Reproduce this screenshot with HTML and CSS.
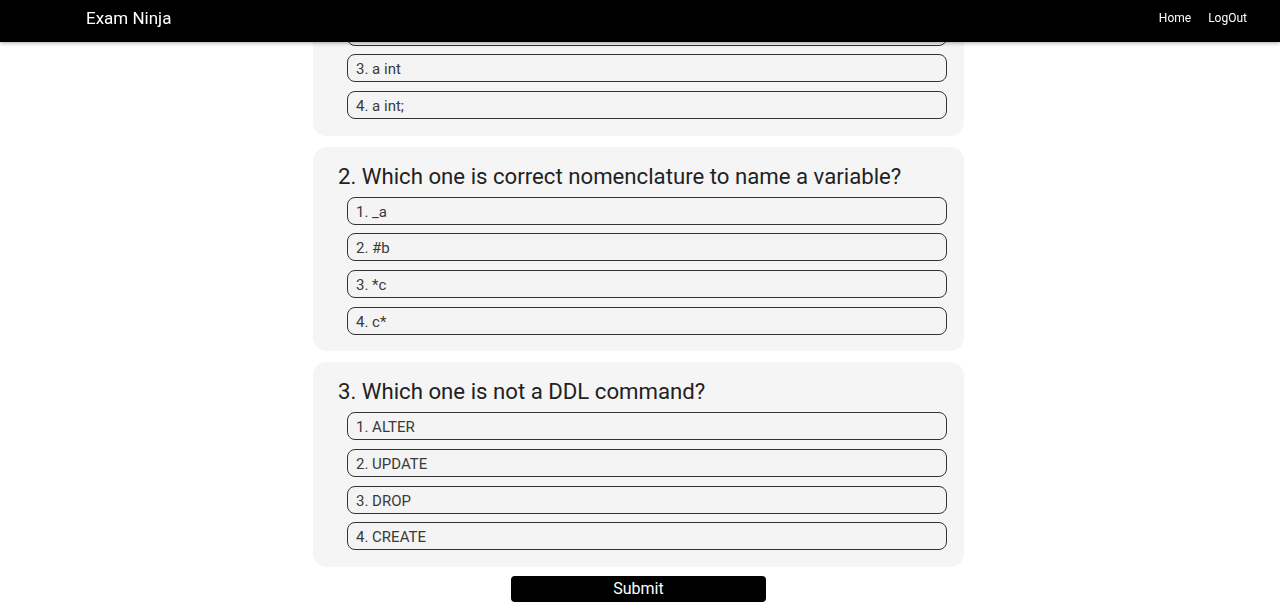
FILE: index.html
```html
<!DOCTYPE html>
<html>
<head>
<meta charset="utf-8">
<title>Exam Ninja</title>
<link rel="stylesheet" href="styles.css">
</head>
<body>
<nav class="navbar">
  <div class="brand">Exam Ninja</div>
  <div class="links"><a href="#">Home</a><a href="#">LogOut</a></div>
</nav>
<main class="quiz">
  <section class="card">
    <h2 class="question">1. Which one is the correct way to declare a variable?</h2>
    <div class="options">
      <div class="option">1. int a;</div>
      <div class="option">2. int a</div>
      <div class="option">3. a int</div>
      <div class="option">4. a int;</div>
    </div>
  </section>
  <section class="card">
    <h2 class="question">2. Which one is correct nomenclature to name a variable?</h2>
    <div class="options">
      <div class="option">1. _a</div>
      <div class="option">2. #b</div>
      <div class="option">3. *c</div>
      <div class="option">4. c*</div>
    </div>
  </section>
  <section class="card">
    <h2 class="question">3. Which one is not a DDL command?</h2>
    <div class="options">
      <div class="option">1. ALTER</div>
      <div class="option">2. UPDATE</div>
      <div class="option">3. DROP</div>
      <div class="option">4. CREATE</div>
    </div>
  </section>
  <button class="submit">Submit</button>
</main>
</body>
</html>
```

FILE: styles.css
```css
html, body {
  margin: 0;
  padding: 0;
  background: #ffffff;
  font-family: Roboto, "Liberation Sans", sans-serif;
}
.navbar {
  position: fixed;
  top: 0;
  left: 0;
  right: 0;
  height: 42px;
  background: #000;
  color: #fff;
  display: flex;
  align-items: center;
  justify-content: space-between;
  padding: 0 33px 0 86px;
  box-shadow: 0 1px 4px rgba(0,0,0,0.35);
  z-index: 10;
}
.brand {
  font-size: 17px;
  line-height: 20px;
  margin-top: -6px;
}
.links {
  display: flex;
  gap: 17px;
  margin-top: -6px;
}
.links a {
  color: #fff;
  text-decoration: none;
  font-size: 12px;
}
.quiz {
  width: 651px;
  margin: -69px auto 0;
  padding: 0 3px 6px 0;
  display: flex;
  flex-direction: column;
  align-items: center;
  gap: 11px;
}
.card {
  width: 651px;
  box-sizing: border-box;
  background: #f5f5f5;
  border-radius: 14px;
  padding: 15px 17px 16.5px 25px;
}
.question {
  margin: 0 0 7px;
  font-size: 22.2px;
  font-weight: 400;
  line-height: 28px;
  color: #222;
}
.options {
  display: flex;
  flex-direction: column;
  gap: 8.7px;
  margin-left: 9px;
}
.option {
  height: 28px;
  box-sizing: border-box;
  border: 1px solid #333;
  border-radius: 8px;
  background: #f4f4f4;
  padding: 1px 8px 0;
  font-size: 15px;
  line-height: 26px;
  color: #3a3a3a;
}
.submit {
  margin-top: -2px;
  width: 255px;
  height: 26px;
  background: #000;
  color: #fff;
  border: none;
  border-radius: 4px;
  font-family: Roboto, "Liberation Sans", sans-serif;
  font-size: 16px;
  padding: 0;
}
```
